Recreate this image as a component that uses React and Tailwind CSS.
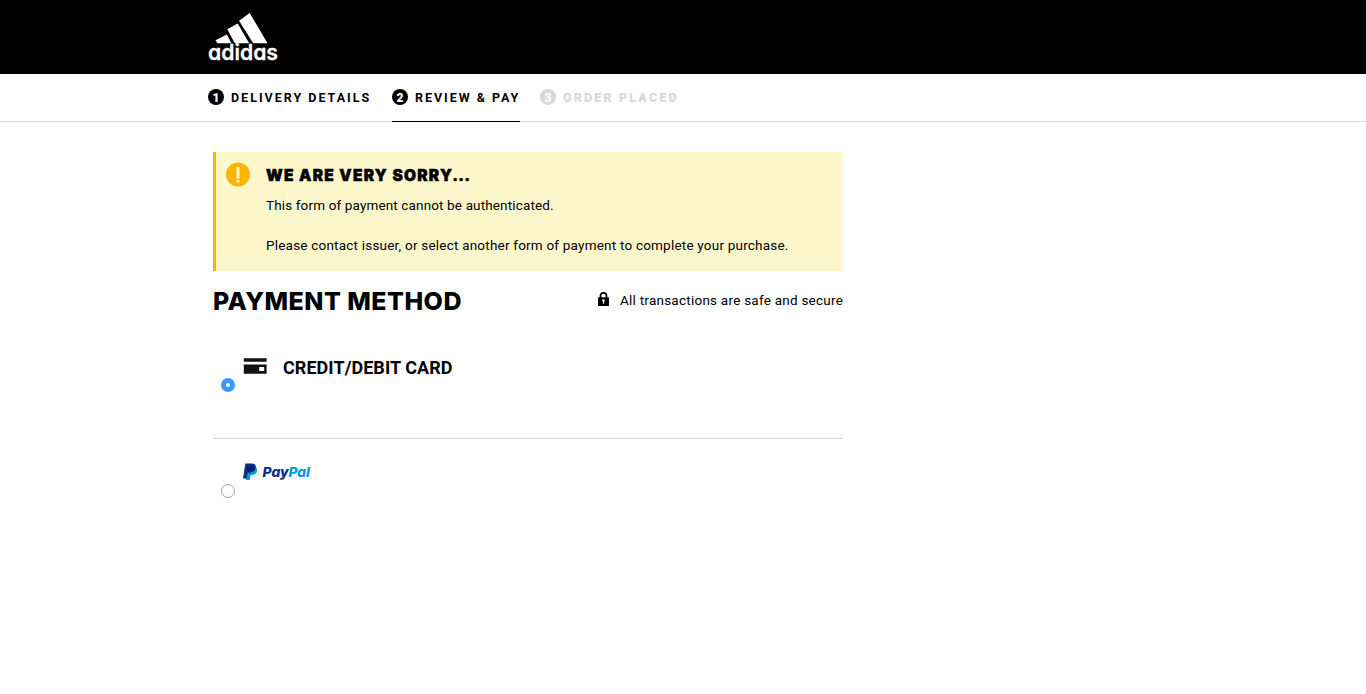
import React from "react";

function AdidasLogo() {
  return (
    <svg width="76" height="56" viewBox="0 0 76 56" fill="#fff" aria-label="adidas">
      <path d="M41.700 0 59.500 30.300H45.200L31 7.700ZM29.700 10.500 41.200 30.300H26.800L19.300 16.300ZM18.800 21.500 23.500 30.300H9.500L7.500 27.300Z" />
      <text
        x="0"
        y="46.500"
        textLength="70"
        lengthAdjust="spacingAndGlyphs"
        className="font-['Inter',sans-serif] text-[22px] font-semibold [font-feature-settings:'cv11']"
        stroke="#fff"
        strokeWidth="0.300"
      >
        adidas
      </text>
    </svg>
  );
}

function Step({ number, label, className, badge, spacing }) {
  return (
    <li className={`flex h-12 items-start pt-[15px] ${className}`}>
      <span className={`mr-[7px] flex size-4 shrink-0 items-center justify-center rounded-full pt-px text-[12px] leading-4 font-black text-white ${badge}`}>
        {number}
      </span>
      <span className={`pt-px text-[12.5px] leading-4 whitespace-nowrap ${spacing}`}>{label}</span>
    </li>
  );
}

function AlertIcon() {
  return (
    <svg width="24" height="25" viewBox="0 0 24 25">
      <circle cx="12" cy="12.500" r="12" fill="#ffb400" />
      <path d="M10.500 5h3v11.500h-3zM10.500 18h3v2.500h-3z" fill="#fff7cc" />
    </svg>
  );
}

function LockIcon() {
  return (
    <svg width="11" height="14" viewBox="0 0 11 14">
      <path d="M2.500 6V3.800C2.500 1.900 3.700.9 5.500.9S8.500 1.900 8.500 3.800V6" fill="none" stroke="#000" strokeWidth="1.700" />
      <path d="M0 5.300h11V14H0z" />
      <path d="M4.200 7.500h2.600v1.800H6.100v2.400H4.900V9.300H4.200z" fill="#fff" />
    </svg>
  );
}

function CardIcon() {
  return (
    <svg width="24" height="16" viewBox="0 0 24 16" fill="#111">
      <path d="M.8.300h22.800v3.500H.8zM.8 6.400h22.800V15.800H.8zM16.200 9v4h5V9z" fillRule="evenodd" />
    </svg>
  );
}

function PayPalLogo() {
  return (
    <svg width="70" height="22" viewBox="0 0 70 22" aria-label="PayPal">
      <path d="M4.500 4h7c2.300.5 3 2 2.500 4.200-.7 2.700-2.500 3.900-5.200 3.900H7.700L6.700 17H2.800Z" fill="#009cde" />
      <path d="M2.400.4h6.300c3 0 4.500 1.500 3.900 4.400-.6 3.300-2.700 4.700-6 4.700H4.700l-1 6H0Z" fill="#003087" />
      <path d="M4.900 4.600c.1-.6.500-.8 1-.8h4.600c.7 0 1.300.1 1.900.3-.5 3.600-2.600 5.400-6 5.400H4.200Z" fill="#012169" />
      <text y="14" className="font-['Inter',sans-serif] text-[13px] font-extrabold italic [font-feature-settings:'cv11']">
        <tspan x="19.500" textLength="26" lengthAdjust="spacingAndGlyphs" fill="#003087">Pay</tspan>
        <tspan x="45.500" textLength="21.500" lengthAdjust="spacingAndGlyphs" fill="#009cde">Pal</tspan>
      </text>
    </svg>
  );
}

export default function App() {
  return (
    <div className="min-h-[694px] bg-white font-['Roboto',sans-serif] text-black">
      <header className="h-[74px] bg-black pt-[13px] pl-[208px]">
        <AdidasLogo />
      </header>

      <nav className="h-12 border-b border-[#d8d8d8] pl-[208px]">
        <ol className="flex">
          <Step number="1" label="DELIVERY DETAILS" badge="bg-black" className="w-[184px] font-bold" spacing="tracking-[2px]" />
          <Step number="2" label="REVIEW & PAY" badge="bg-black" className="w-32 border-b border-black font-bold" spacing="tracking-[1.97px]" />
          <Step number="3" label="ORDER PLACED" badge="bg-[#d8d8d8]" className="ml-5 font-black text-[#d8d8d8]" spacing="tracking-[2.15px]" />
        </ol>
      </nav>

      <main className="ml-[213px] w-[630px] pt-[30px]">
        <section className="flex h-[119px] border-l-[3px] border-[#ffb400] bg-[#fff7cc] pl-[10px]">
          <div className="mt-[10px] w-10">
            <AlertIcon />
          </div>
          <div className="whitespace-nowrap">
            <h2 className="mt-[14px] font-['Inter',sans-serif] text-[15.5px] leading-5 font-black tracking-[1.25px] [-webkit-text-stroke:0.5px_#000]">
              WE ARE VERY SORRY<span className="-ml-px tracking-[0.2px]">...</span>
            </h2>
            <p className="mt-[9px] text-[13.5px] leading-5 tracking-[0.14px]">This form of payment cannot be authenticated.</p>
            <p className="mt-5 text-[13.5px] leading-5 tracking-[0.21px]">Please contact issuer, or select another form of payment to complete your purchase.</p>
          </div>
        </section>

        <div className="flex h-[60px] justify-between whitespace-nowrap">
          <h1 className="mt-[15px] font-['Inter',sans-serif] text-[25px] leading-[30px] font-extrabold tracking-[0.47px]">PAYMENT METHOD</h1>
          <div className="mt-[19px] flex h-5 w-[245px]">
            <div className="mt-[2px] w-[22px] shrink-0">
              <LockIcon />
            </div>
            <span className="text-[13.5px] leading-5 tracking-[0.24px]">All transactions are safe and secure</span>
          </div>
        </div>

        <label className="flex h-[108px] border-b border-[#d8d8d8] pl-2">
          <span className="mt-[47px] flex size-[14px] items-center justify-center rounded-full bg-[#3b99fc]">
            <span className="size-1 rounded-full bg-white" />
          </span>
          <span className="mt-[27px] ml-2 w-10">
            <CardIcon />
          </span>
          <span className="mt-[27px] text-[18px] leading-5 font-bold tracking-[0.06px] whitespace-nowrap">CREDIT/DEBIT CARD</span>
        </label>

        <label className="flex h-[100px] pl-2">
          <span className="mt-[45px] size-[14px] rounded-full border border-[#a6a6a6] bg-white" />
          <span className="mt-6 ml-2">
            <PayPalLogo />
          </span>
        </label>
      </main>
    </div>
  );
}
